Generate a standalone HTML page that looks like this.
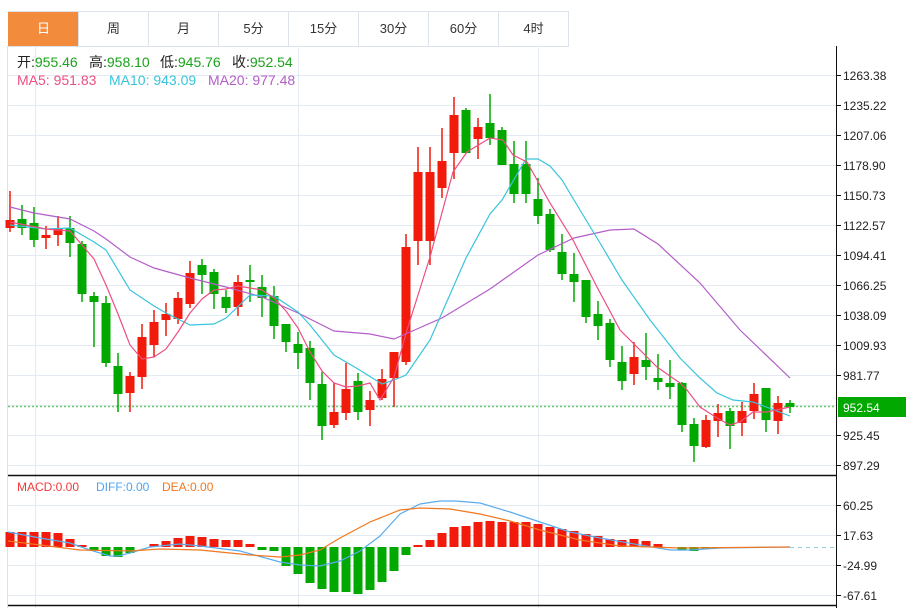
<!DOCTYPE html>
<html><head><meta charset="utf-8"><style>
body{margin:0;background:#fff;width:914px;height:608px;overflow:hidden;font-family:"Liberation Sans","Noto Sans CJK SC",sans-serif}
.tabs{position:absolute;left:8px;top:11px;height:34px;display:flex;border:1px solid #dde3ea;border-left:none}
.tabs div{width:69px;height:34px;line-height:34px;text-align:center;font-size:13px;color:#333;border-left:1px solid #dde3ea}
.tabs div.a{background:#f28c3c;color:#fff;border-left-color:#f28c3c}
</style></head><body>
<div class="tabs"><div class="a">日</div><div>周</div><div>月</div><div>5分</div><div>15分</div><div>30分</div><div>60分</div><div>4时</div></div>
<svg width="914" height="608" style="position:absolute;left:0;top:0" font-family="Liberation Sans, Noto Sans CJK SC, sans-serif">
<g stroke="#e3eaf1" stroke-width="1">
<path d="M8 75.5H836M8 105.5H836M8 135.5H836M8 165.5H836M8 195.5H836M8 225.5H836M8 255.5H836M8 285.5H836M8 315.5H836M8 345.5H836M8 375.5H836M8 405.5H836M8 435.5H836M8 465.5H836"/>
<path d="M8 505.5H836M8 535.5H836M8 565.5H836M8 595.5H836"/>
<path d="M35.5 46V608M298.5 46V608M538.5 46V608"/>
</g>
<path d="M7.5 46V608" stroke="#dde3ea"/>
<path d="M8 475.5H836M8 605.5H836" stroke="#111" stroke-width="1.5"/>
<path d="M836.5 46V608" stroke="#111"/>
<g stroke="#111"><path d="M836 75.5h5M836 105.5h5M836 135.5h5M836 165.5h5M836 195.5h5M836 225.5h5M836 255.5h5M836 285.5h5M836 315.5h5M836 345.5h5M836 375.5h5M836 435.5h5M836 465.5h5M836 505.5h5M836 535.5h5M836 565.5h5M836 595.5h5"/></g>
<g font-size="12" fill="#222">
<text x="843" y="80">1263.38</text><text x="843" y="110">1235.22</text><text x="843" y="140">1207.06</text><text x="843" y="170">1178.90</text><text x="843" y="200">1150.73</text><text x="843" y="230">1122.57</text><text x="843" y="260">1094.41</text><text x="843" y="290">1066.25</text><text x="843" y="320">1038.09</text><text x="843" y="350">1009.93</text><text x="843" y="380">981.77</text><text x="843" y="440">925.45</text><text x="843" y="470">897.29</text>
<text x="843" y="510">60.25</text><text x="843" y="540">17.63</text><text x="843" y="570">-24.99</text><text x="843" y="600">-67.61</text>
</g>
<rect x="838" y="397" width="68" height="20" fill="#00a800"/>
<text x="843" y="412" font-size="12" fill="#fff">952.54</text>
<path d="M8 406.5H836" stroke="#6cc86c" stroke-dasharray="2,2" stroke-width="1.5"/>
<path d="M790 547.5H836" stroke="#8ccbe0" stroke-dasharray="4,4"/>
<g font-size="14">
<text x="17" y="67" fill="#222">开:<tspan fill="#1aa31a">955.46</tspan></text>
<text x="89" y="67" fill="#222">高:<tspan fill="#1aa31a">958.10</tspan></text>
<text x="160" y="67" fill="#222">低:<tspan fill="#1aa31a">945.76</tspan></text>
<text x="232" y="67" fill="#222">收:<tspan fill="#1aa31a">952.54</tspan></text>
<text x="17" y="85" fill="#ec4f82">MA5: 951.83</text><text x="109" y="85" fill="#38c4dc">MA10: 943.09</text><text x="208" y="85" fill="#b45ec8">MA20: 977.48</text>
<text x="17" y="491" font-size="12" fill="#f03a3a">MACD:0.00</text><text x="96" y="491" font-size="12" fill="#4ea4f0">DIFF:0.00</text><text x="162" y="491" font-size="12" fill="#f07820">DEA:0.00</text>
</g>
<path stroke="#f21a0a" stroke-width="1.5" fill="none" d="M10 191V232M46 226V249M58 216V246M130 372V412M142 324V389M154 310V357M166 303V336M178 292V324M190 261V308M238 275V316M334 383V428M346 363V420M370 391V426M382 369V400M394 352V407M406 234V365M418 147V265M430 147V265M442 128V198M454 97V179M478 118V159M634 342V385M706 415V448M718 404V437M742 402V436M754 383V419M778 396V434"/>
<path stroke="#00a800" stroke-width="1.5" fill="none" d="M22 205V235M34 207V247M70 216V257M82 241V302M94 292V347M106 296V367M118 353V412M202 259V294M214 269V309M226 290V313M250 265V302M262 275V317M274 286V339M286 324V352M298 332V369M310 341V400M322 372V440M358 373V420M466 108V153M490 94V145M502 127V165M514 141V203M526 141V203M538 178V224M550 209V252M562 234V280M574 253V302M586 280V323M598 301V340M610 319V367M622 346V390M646 333V380M658 354V390M670 360V399M682 382V432M694 418V462M730 408V449M766 388V432M790 400V413"/>
<g fill="#f21a0a">
<rect x="5.5" y="220" width="9" height="8"/><rect x="41.5" y="235" width="9" height="3"/><rect x="53.5" y="228" width="9" height="7"/><rect x="125.5" y="376" width="9" height="17"/><rect x="137.5" y="337" width="9" height="40"/><rect x="149.5" y="322" width="9" height="23"/><rect x="161.5" y="314" width="9" height="6"/><rect x="173.5" y="298" width="9" height="21"/><rect x="185.5" y="273" width="9" height="31"/><rect x="233.5" y="282" width="9" height="25"/><rect x="329.5" y="412" width="9" height="13"/><rect x="341.5" y="389" width="9" height="24"/><rect x="365.5" y="400" width="9" height="10"/><rect x="377.5" y="379" width="9" height="19"/><rect x="389.5" y="352" width="9" height="26"/><rect x="401.5" y="247" width="9" height="115"/><rect x="413.5" y="172" width="9" height="69"/><rect x="425.5" y="172" width="9" height="69"/><rect x="437.5" y="161" width="9" height="27"/><rect x="449.5" y="115" width="9" height="38"/><rect x="473.5" y="127" width="9" height="12"/><rect x="629.5" y="357" width="9" height="17"/><rect x="701.5" y="420" width="9" height="27"/><rect x="713.5" y="413" width="9" height="8"/><rect x="737.5" y="411" width="9" height="12"/><rect x="749.5" y="394" width="9" height="17"/><rect x="773.5" y="403" width="9" height="18"/>
</g>
<g fill="#00a800">
<rect x="17.5" y="219" width="9" height="9"/><rect x="29.5" y="223" width="9" height="17"/><rect x="65.5" y="228" width="9" height="15"/><rect x="77.5" y="244" width="9" height="50"/><rect x="89.5" y="296" width="9" height="6"/><rect x="101.5" y="303" width="9" height="60"/><rect x="113.5" y="366" width="9" height="28"/><rect x="197.5" y="265" width="9" height="10"/><rect x="209.5" y="272" width="9" height="22"/><rect x="221.5" y="297" width="9" height="11"/><rect x="245.5" y="280" width="9" height="2"/><rect x="257.5" y="287" width="9" height="11"/><rect x="269.5" y="296" width="9" height="30"/><rect x="281.5" y="324" width="9" height="18"/><rect x="293.5" y="344" width="9" height="9"/><rect x="305.5" y="348" width="9" height="35"/><rect x="317.5" y="384" width="9" height="42"/><rect x="353.5" y="381" width="9" height="31"/><rect x="461.5" y="110" width="9" height="43"/><rect x="485.5" y="123" width="9" height="15"/><rect x="497.5" y="130" width="9" height="35"/><rect x="509.5" y="164" width="9" height="30"/><rect x="521.5" y="164" width="9" height="30"/><rect x="533.5" y="199" width="9" height="17"/><rect x="545.5" y="214" width="9" height="36"/><rect x="557.5" y="252" width="9" height="22"/><rect x="569.5" y="274" width="9" height="8"/><rect x="581.5" y="280" width="9" height="37"/><rect x="593.5" y="314" width="9" height="12"/><rect x="605.5" y="323" width="9" height="37"/><rect x="617.5" y="362" width="9" height="19"/><rect x="641.5" y="360" width="9" height="7"/><rect x="653.5" y="378" width="9" height="4"/><rect x="665.5" y="383" width="9" height="4"/><rect x="677.5" y="383" width="9" height="42"/><rect x="689.5" y="424" width="9" height="22"/><rect x="725.5" y="411" width="9" height="15"/><rect x="761.5" y="388" width="9" height="32"/><rect x="785.5" y="403" width="9" height="4"/>
</g>
<g fill="none" stroke-width="1.2">
<polyline stroke="#b45ec8" points="10,207 34,213 70,219 94,231 106,239 130,257 154,268 190,278 226,287 262,297 298,313 334,331 370,334 394,339 442,318 490,289 538,255 574,238 610,230 634,229 658,244 700,283 740,330 790,378"/>
<polyline stroke="#38c4dc" points="10,225 46,229 70,228 94,242 106,250 130,290 154,306 166,313 190,325 214,324 226,318 250,295 274,296 298,312 310,325 334,355 358,369 382,384 394,380 406,375 430,340 466,258 490,214 502,200 526,159 538,159 550,166 562,180 580,210 600,243 622,280 650,320 680,358 700,378 717,393 733,400 753,402 790,416"/>
<polyline stroke="#ec4f82" points="10,222 46,229 70,231 94,259 106,285 118,314 130,345 142,359 154,357 166,349 178,332 190,313 202,299 214,290 226,289 238,286 250,288 262,290 274,298 286,311 298,328 310,352 322,371 334,383 346,387 358,386 370,383 380,400 394,377 407,330 430,257 453,172 467,152 490,138 503,140 513,155 527,162 550,203 573,240 597,287 620,330 647,357 657,367 680,383 687,390 700,407 717,418 730,425 740,422 753,412 767,412 790,407"/>
</g>
<g fill="#f21a0a">
<rect x="5.5" y="532" width="9" height="15"/><rect x="17.5" y="532" width="9" height="15"/><rect x="29.5" y="532" width="9" height="15"/><rect x="41.5" y="532" width="9" height="15"/><rect x="53.5" y="533" width="9" height="14"/><rect x="65.5" y="539" width="9" height="8"/><rect x="77.5" y="545" width="9" height="2"/>
<rect x="149.5" y="544" width="9" height="3"/><rect x="161.5" y="541" width="9" height="6"/><rect x="173.5" y="538" width="9" height="9"/><rect x="185.5" y="536" width="9" height="11"/><rect x="197.5" y="537" width="9" height="10"/><rect x="209.5" y="539" width="9" height="8"/><rect x="221.5" y="540" width="9" height="7"/><rect x="233.5" y="540" width="9" height="7"/><rect x="245.5" y="544" width="9" height="3"/>
<rect x="413.5" y="545" width="9" height="2"/><rect x="425.5" y="540" width="9" height="7"/><rect x="437.5" y="533" width="9" height="14"/><rect x="449.5" y="527" width="9" height="20"/><rect x="461.5" y="526" width="9" height="21"/><rect x="473.5" y="522" width="9" height="25"/><rect x="485.5" y="521" width="9" height="26"/><rect x="497.5" y="522" width="9" height="25"/><rect x="509.5" y="522" width="9" height="25"/><rect x="521.5" y="522" width="9" height="25"/><rect x="533.5" y="524" width="9" height="23"/><rect x="545.5" y="527" width="9" height="20"/><rect x="557.5" y="529" width="9" height="18"/><rect x="569.5" y="531" width="9" height="16"/><rect x="581.5" y="534" width="9" height="13"/><rect x="593.5" y="536" width="9" height="11"/><rect x="605.5" y="539" width="9" height="8"/><rect x="617.5" y="540" width="9" height="7"/><rect x="629.5" y="539" width="9" height="8"/><rect x="641.5" y="541" width="9" height="6"/><rect x="653.5" y="544" width="9" height="3"/>
</g>
<g fill="#00a800">
<rect x="89.5" y="547" width="9" height="4"/><rect x="101.5" y="547" width="9" height="9"/><rect x="113.5" y="547" width="9" height="10"/><rect x="125.5" y="547" width="9" height="6"/>
<rect x="257.5" y="547" width="9" height="3"/><rect x="269.5" y="547" width="9" height="4"/><rect x="281.5" y="547" width="9" height="19"/><rect x="293.5" y="547" width="9" height="27"/><rect x="305.5" y="547" width="9" height="36"/><rect x="317.5" y="547" width="9" height="42"/><rect x="329.5" y="547" width="9" height="45"/><rect x="341.5" y="547" width="9" height="45"/><rect x="353.5" y="547" width="9" height="47"/><rect x="365.5" y="547" width="9" height="43"/><rect x="377.5" y="547" width="9" height="35"/><rect x="389.5" y="547" width="9" height="24"/><rect x="401.5" y="547" width="9" height="8"/>
<rect x="677.5" y="547" width="9" height="3"/><rect x="689.5" y="547" width="9" height="4"/><rect x="701.5" y="547" width="9" height="2"/><rect x="713.5" y="547" width="9" height="1"/>
</g>
<g fill="none" stroke-width="1.2">
<polyline stroke="#5aacf0" points="8,532 40,538 70,543 90,550 110,556 118,556 130,553 150,547 180,544 200,546 240,551 280,562 300,565 320,566 340,561 360,551 380,536 400,514 420,504 440,501 455,501 480,503 510,512 540,522 570,532 600,538 640,545 670,550 690,550 720,548 790,547"/>
<polyline stroke="#f07820" points="8,541 40,545 80,550 130,551 160,549 200,550 250,555 280,557 300,555 320,550 340,538 370,522 400,510 420,508 450,509 480,514 510,521 540,530 580,540 620,546 680,548 790,547"/>
</g>
</svg>
</body></html>
